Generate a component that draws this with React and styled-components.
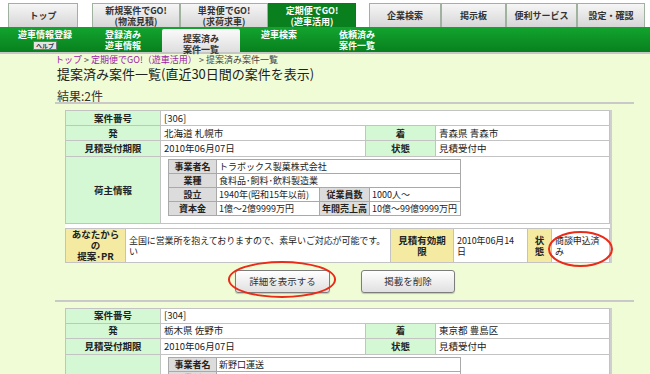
import React from "react";
import styled, { createGlobalStyle } from "styled-components";

const GlobalStyle = createGlobalStyle`
  html, body {
    margin: 0;
    padding: 0;
    background: #f0fcd6;
    font-family: "Noto Sans CJK JP", "Noto Sans", "Liberation Sans", sans-serif;
    color: #333;
  }
`;

const Page = styled.div`
  width: 650px;
  min-height: 374px;
  overflow: hidden;
`;

const TopTabs = styled.div`
  display: flex;
  align-items: flex-end;
  height: 27px;
  padding-left: 8px;
  background: #fff;
  box-sizing: border-box;
`;

const Tab = styled.div`
  box-sizing: border-box;
  width: ${({ w }) => w}px;
  height: 24px;
  margin-left: ${({ gap }) => gap || 0}px;
  border: 1px solid ${({ active }) => (active ? "#0a7a1d" : "#9fb19f")};
  border-bottom: none;
  background: ${({ active }) =>
    active ? "#0a7f1e" : "linear-gradient(#f6f6f6, #d6d6d6)"};
  color: ${({ active }) => (active ? "#fff" : "#333")};
  font-size: 9px;
  font-weight: bold;
  line-height: 11px;
  display: flex;
  flex-direction: column;
  align-items: center;
  justify-content: center;
  text-align: center;
`;

const SubNav = styled.div`
  display: flex;
  height: 25px;
  padding-left: 6px;
  background: linear-gradient(#13a42f, #08801d);
  border-bottom: 2px solid #c6c6c6;
`;

const SubItem = styled.div`
  box-sizing: border-box;
  width: 78px;
  height: ${({ active }) => (active ? 23 : 25)}px;
  margin-top: ${({ active }) => (active ? 2 : 0)}px;
  padding-top: ${({ active }) => (active ? 4 : 2)}px;
  background: ${({ active }) =>
    active ? "linear-gradient(#fbfbfb, #dedede)" : "transparent"};
  border-radius: ${({ active }) => (active ? "2px 2px 0 0" : "0")};
  color: ${({ active }) => (active ? "#333" : "#fff")};
  font-size: 9px;
  font-weight: bold;
  line-height: 11px;
  display: flex;
  flex-direction: column;
  align-items: center;
  text-align: center;
`;

const HelpBadge = styled.span`
  margin-top: 1px;
  padding: 0 2px;
  font-size: 6px;
  line-height: 7px;
  background: #e4e4e4;
  color: #333;
  border: 1px solid #777;
`;

const Content = styled.div`
  padding: 0 16px 0 55px;
`;

const Breadcrumb = styled.div`
  font-size: 9px;
  line-height: 12px;
  color: #444;
`;

const Crumb = styled.a`
  color: #a020a8;
  text-decoration: none;
`;

const Title = styled.h1`
  margin: 0;
  padding-left: 2px;
  font-size: 13px;
  line-height: 15px;
  font-weight: normal;
  color: #222;
`;

const Result = styled.div`
  margin-top: 8px;
  padding-left: 2px;
  font-size: 12px;
  line-height: 14px;
  color: #333;
  border-bottom: 2px solid #c9c9c9;
  height: 13px;
`;

const Record = styled.section`
  padding: 6px 22px 7px 10px;
  border-bottom: 2px solid #c9c9c9;
`;

const Card = styled.div`
  background: #fff;
  border-right: 2px solid #cfcfcf;
  display: flex;
  flex-direction: column;
  gap: 4px;
`;

const Table = styled.table`
  width: 100%;
  border-collapse: collapse;
  table-layout: fixed;
  font-size: 9.5px;
`;

const Th = styled.td`
  border: 1px solid #c3c3c3;
  background: ${({ tone }) => (tone === "yellow" ? "#f4eaa2" : "#d4f8d4")};
  font-weight: bold;
  text-align: center;
  vertical-align: middle;
  height: ${({ h }) => h || 14}px;
  padding: 0 1px;
  line-height: 11px;
  color: #222;
  white-space: nowrap;
`;

const Td = styled.td`
  position: relative;
  border: 1px solid #c3c3c3;
  vertical-align: ${({ top }) => (top ? "top" : "middle")};
  padding: ${({ top }) => (top ? "2px 7px 6px" : "0 3px")};
  font-size: ${({ small }) => (small ? 9 : 9.5)}px;
  letter-spacing: ${({ small }) => (small ? "-0.1px" : "0")};
  line-height: 11px;
  color: #222;
  white-space: nowrap;
`;

const Inner = styled.table`
  width: 293px;
  border-collapse: collapse;
  table-layout: fixed;
  font-size: 9px;
`;

const InnerTh = styled.td`
  border: 1px solid #a9a9a9;
  background: #dcdcdc;
  font-weight: bold;
  font-size: 9px;
  text-align: center;
  height: 13px;
  padding: 0;
  line-height: 13px;
  white-space: nowrap;
`;

const InnerTd = styled.td`
  border: 1px solid #a9a9a9;
  padding: 0 2px;
  line-height: 13px;
  white-space: nowrap;
  overflow: hidden;
`;

const Buttons = styled.div`
  display: flex;
  gap: 31px;
  padding: 3px 0 0 170px;
`;

const ButtonWrap = styled.div`
  position: relative;
`;

const Button = styled.button`
  height: 23px;
  width: ${({ w }) => w}px;
  font-family: inherit;
  font-size: 9.5px;
  color: #333;
  background: linear-gradient(#ffffff, #e0e0e0);
  border: 1px solid #7d7d7d;
  border-radius: 3px;
  box-shadow: 0 1px 1px rgba(0, 0, 0, 0.2);
  padding: 0;
`;

const Ring = styled.span`
  position: absolute;
  top: ${({ t }) => t}px;
  bottom: ${({ b }) => b}px;
  left: ${({ l }) => l}px;
  right: ${({ r }) => r}px;
  border: 2.5px solid #ec2a18;
  border-radius: 50%;
  pointer-events: none;
`;

const records = [
  {
    no: "306",
    from: "北海道 札幌市",
    to: "青森県 青森市",
    limit: "2010年06月07日",
    status: "見積受付中",
    company: "トラボックス製菓株式会社",
    industry: "食料品･飼料･飲料製造業",
    founded: "1940年(昭和15年以前)",
    staff: "1000人〜",
    capital: "1億〜2億9999万円",
    sales: "10億〜99億9999万円",
    marked: true,
  },
  {
    no: "304",
    from: "栃木県 佐野市",
    to: "東京都 豊島区",
    limit: "2010年06月07日",
    status: "見積受付中",
    company: "新野口運送",
    industry: "道路貨物運送業",
    founded: "1985年(昭和60年)",
    staff: "10人〜",
    capital: "1000万〜4999万円",
    sales: "1億〜4億9999万円",
    marked: false,
  },
];

const RecordCard = ({ r }) => (
  <Record>
    <Card>
      <Table>
        <colgroup>
          <col style={{ width: 95 }} />
          <col style={{ width: 205 }} />
          <col style={{ width: 70 }} />
          <col />
        </colgroup>
        <tbody>
          <tr>
            <Th>案件番号</Th>
            <Td colSpan={3}>[{r.no}]</Td>
          </tr>
          <tr>
            <Th>発</Th>
            <Td>{r.from}</Td>
            <Th>着</Th>
            <Td>{r.to}</Td>
          </tr>
          <tr>
            <Th h={15}>見積受付期限</Th>
            <Td>{r.limit}</Td>
            <Th h={15}>状態</Th>
            <Td>{r.status}</Td>
          </tr>
          <tr>
            <Th h={66}>荷主情報</Th>
            <Td colSpan={3} top>
              <Inner>
                <colgroup>
                  <col style={{ width: 48 }} />
                  <col style={{ width: 103 }} />
                  <col style={{ width: 50 }} />
                  <col />
                </colgroup>
                <tbody>
                  <tr>
                    <InnerTh>事業者名</InnerTh>
                    <InnerTd colSpan={3}>{r.company}</InnerTd>
                  </tr>
                  <tr>
                    <InnerTh>業種</InnerTh>
                    <InnerTd colSpan={3}>{r.industry}</InnerTd>
                  </tr>
                  <tr>
                    <InnerTh>設立</InnerTh>
                    <InnerTd>{r.founded}</InnerTd>
                    <InnerTh>従業員数</InnerTh>
                    <InnerTd>{r.staff}</InnerTd>
                  </tr>
                  <tr>
                    <InnerTh>資本金</InnerTh>
                    <InnerTd>{r.capital}</InnerTd>
                    <InnerTh>年間売上高</InnerTh>
                    <InnerTd>{r.sales}</InnerTd>
                  </tr>
                </tbody>
              </Inner>
            </Td>
          </tr>
        </tbody>
      </Table>
      <Table>
        <colgroup>
          <col style={{ width: 60 }} />
          <col style={{ width: 265 }} />
          <col style={{ width: 63 }} />
          <col style={{ width: 74 }} />
          <col style={{ width: 24 }} />
          <col />
        </colgroup>
        <tbody>
          <tr>
            <Th tone="yellow" h={33}>
              あなたから
              <br />の<br />
              提案･PR
            </Th>
            <Td small>
              全国に営業所を抱えておりますので、素早いご対応が可能です。
              <br />い
            </Td>
            <Th tone="yellow">
              見積有効期
              <br />限
            </Th>
            <Td small>
              2010年06月14
              <br />日
            </Td>
            <Th tone="yellow">
              状<br />態
            </Th>
            <Td small>
              商談申込済
              <br />み
              {r.marked && <Ring t={2} b={-5} l={-4} r={-4} />}
            </Td>
          </tr>
        </tbody>
      </Table>
    </Card>
    <Buttons>
      <ButtonWrap>
        <Button w={95}>詳細を表示する</Button>
        {r.marked && <Ring t={-5} b={-5} l={-7} r={-6} />}
      </ButtonWrap>
      <ButtonWrap>
        <Button w={94}>掲載を削除</Button>
      </ButtonWrap>
    </Buttons>
  </Record>
);

const App = () => (
  <Page>
    <GlobalStyle />
    <TopTabs>
      <Tab w={70}>トップ</Tab>
      <Tab w={88} gap={14}>
        新規案件でGO!<span>(物流見積)</span>
      </Tab>
      <Tab w={88}>
        単発便でGO!<span>(求荷求車)</span>
      </Tab>
      <Tab w={88} active>
        定期便でGO!<span>(遊車活用)</span>
      </Tab>
      <Tab w={72} gap={13}>企業検索</Tab>
      <Tab w={65}>掲示板</Tab>
      <Tab w={71}>便利サービス</Tab>
      <Tab w={68}>設定・確認</Tab>
    </TopTabs>
    <SubNav>
      <SubItem>
        遊車情報登録
        <HelpBadge>ヘルプ</HelpBadge>
      </SubItem>
      <SubItem>
        登録済み<span>遊車情報</span>
      </SubItem>
      <SubItem active>
        提案済み<span>案件一覧</span>
      </SubItem>
      <SubItem>遊車検索</SubItem>
      <SubItem>
        依頼済み<span>案件一覧</span>
      </SubItem>
    </SubNav>
    <Content>
      <Breadcrumb>
        <Crumb href="#">トップ</Crumb> &gt;{" "}
        <Crumb href="#">定期便でGO!（遊車活用）</Crumb> &gt; 提案済み案件一覧
      </Breadcrumb>
      <Title>提案済み案件一覧(直近30日間の案件を表示)</Title>
      <Result>結果:2件</Result>
      {records.map((r) => (
        <RecordCard key={r.no} r={r} />
      ))}
    </Content>
  </Page>
);

export default App;
